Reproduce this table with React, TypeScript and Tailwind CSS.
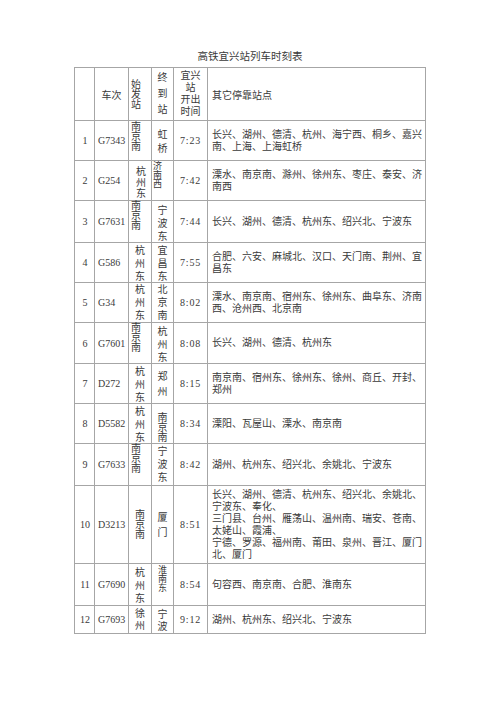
type Stack = {
  t: string
  lh: string
  cls: string
}

interface Train {
  no: number
  code: string
  from: Stack
  to: Stack
  time: string
  stops: string[]
}

const trains: Train[] = [
  {
    no: 1,
    code: 'G7343',
    from: { t: '南京南', lh: 'leading-[10px]', cls: 'justify-start items-start pl-[2px] pt-[1px]' },
    to: { t: '虹桥', lh: 'leading-[14px]', cls: 'justify-center items-center pt-[2px]' },
    time: '7:23',
    stops: ['长兴、湖州、德清、杭州、海宁西、桐乡、嘉兴', '南、上海、上海虹桥']
  },
  {
    no: 2,
    code: 'G254',
    from: { t: '杭州东', lh: 'leading-[11px]', cls: 'justify-center items-center pl-[2px] pt-[3px]' },
    to: { t: '济南西', lh: 'leading-[9px]', cls: 'justify-start items-start pl-[1px] pt-[1px] text-[9px]' },
    time: '7:42',
    stops: ['溧水、南京南、滁州、徐州东、枣庄、泰安、济', '南西']
  },
  {
    no: 3,
    code: 'G7631',
    from: { t: '南京南', lh: 'leading-[10px]', cls: 'justify-start items-start pl-[2px]' },
    to: { t: '宁波东', lh: 'leading-[13px]', cls: 'justify-start items-center pt-[3px]' },
    time: '7:44',
    stops: ['长兴、湖州、德清、杭州东、绍兴北、宁波东']
  },
  {
    no: 4,
    code: 'G586',
    from: { t: '杭州东', lh: 'leading-[13px]', cls: 'justify-start items-center pt-[1px]' },
    to: { t: '宜昌东', lh: 'leading-[13px]', cls: 'justify-start items-center pt-[1px]' },
    time: '7:55',
    stops: ['合肥、六安、麻城北、汉口、天门南、荆州、宜', '昌东']
  },
  {
    no: 5,
    code: 'G34',
    from: { t: '杭州东', lh: 'leading-[13px]', cls: 'justify-start items-center' },
    to: { t: '北京南', lh: 'leading-[13px]', cls: 'justify-start items-center' },
    time: '8:02',
    stops: ['溧水、南京南、宿州东、徐州东、曲阜东、济南', '西、沧州西、北京南']
  },
  {
    no: 6,
    code: 'G7601',
    from: { t: '南京南', lh: 'leading-[10px]', cls: 'justify-start items-start pl-[2px]' },
    to: { t: '杭州东', lh: 'leading-[13px]', cls: 'justify-start items-center pt-[2px]' },
    time: '8:08',
    stops: ['长兴、湖州、德清、杭州东']
  },
  {
    no: 7,
    code: 'D272',
    from: { t: '杭州东', lh: 'leading-[13px]', cls: 'justify-start items-center pt-[1px]' },
    to: { t: '郑州', lh: 'leading-[15px]', cls: 'justify-center items-center' },
    time: '8:15',
    stops: ['南京南、宿州东、徐州东、徐州、商丘、开封、', '郑州']
  },
  {
    no: 8,
    code: 'D5582',
    from: { t: '杭州东', lh: 'leading-[13px]', cls: 'justify-start items-center pt-[1px]' },
    to: { t: '南京南', lh: 'leading-[10px]', cls: 'justify-end items-center' },
    time: '8:34',
    stops: ['溧阳、瓦屋山、溧水、南京南']
  },
  {
    no: 9,
    code: 'G7633',
    from: { t: '南京南', lh: 'leading-[10px]', cls: 'justify-start items-start pl-[2px]' },
    to: { t: '宁波东', lh: 'leading-[13px]', cls: 'justify-start items-center pt-[1px]' },
    time: '8:42',
    stops: ['湖州、杭州东、绍兴北、余姚北、宁波东']
  },
  {
    no: 10,
    code: 'D3213',
    from: { t: '南京南', lh: 'leading-[10px]', cls: 'justify-center items-center' },
    to: { t: '厦门', lh: 'leading-[15px]', cls: 'justify-center items-center' },
    time: '8:51',
    stops: [
      '长兴、湖州、德清、杭州东、绍兴北、余姚北、',
      '宁波东、奉化、',
      '三门县、台州、雁荡山、温州南、瑞安、苍南、',
      '太姥山、霞浦、',
      '宁德、罗源、福州南、莆田、泉州、晋江、厦门',
      '北、厦门'
    ]
  },
  {
    no: 11,
    code: 'G7690',
    from: { t: '杭州东', lh: 'leading-[13px]', cls: 'justify-start items-center pt-[2px]' },
    to: { t: '淮南东', lh: 'leading-[9px]', cls: 'justify-start items-center pt-[2px] text-[9px]' },
    time: '8:54',
    stops: ['句容西、南京南、合肥、淮南东']
  },
  {
    no: 12,
    code: 'G7693',
    from: { t: '徐州', lh: 'leading-[12px]', cls: 'justify-center items-center' },
    to: { t: '宁波', lh: 'leading-[12px]', cls: 'justify-center items-center pt-[2px]' },
    time: '9:12',
    stops: ['湖州、杭州东、绍兴北、宁波东']
  }
]

const cell = 'border-r border-b border-[#a6a6a6]'

function StackText({ s }: { s: Stack }) {
  return (
    <div className={`${cell} flex flex-col ${s.cls}`}>
      {s.t.split('').map((c, i) => (
        <span key={i} className={`block ${s.lh}`}>
          {c}
        </span>
      ))}
    </div>
  )
}

export default function App() {
  return (
    <div className="w-[500px] h-[707px] bg-white pt-[51px] text-[10px] text-[#3a3a3a] font-['Liberation_Serif','Noto_Sans_CJK_SC',serif]">
      <div className="mx-auto w-[352px] h-[12px] leading-[12px] text-center text-[10.5px] mb-[4px]">
        高铁宜兴站列车时刻表
      </div>

      <div className="mx-auto w-[352px] grid grid-cols-[20px_34px_23px_22px_34px_218px] grid-rows-[53px_40px_40px_42px_40px_40px_41px_40px_40px_42px_78px_42px_28px] border-l border-t border-[#a6a6a6]">
        {/* header row */}
        <div className={cell}></div>
        <div className={`${cell} flex items-center justify-center pt-[2px]`}>车次</div>
        <div className={`${cell} flex flex-col justify-center items-start pl-[2px] pt-[2px]`}>
          <span className="leading-[10px]">始</span>
          <span className="leading-[10px]">发</span>
          <span className="leading-[10px]">站</span>
        </div>
        <div className={`${cell} flex flex-col justify-center items-center`}>
          <span className="leading-[16px]">终</span>
          <span className="leading-[16px]">到</span>
          <span className="leading-[16px]">站</span>
        </div>
        <div className={`${cell} flex flex-col justify-center items-center`}>
          <span className="leading-[12px]">宜兴</span>
          <span className="leading-[12px]">站</span>
          <span className="leading-[12px]">开出</span>
          <span className="leading-[12px]">时间</span>
        </div>
        <div className={`${cell} flex items-center pl-[4px] pt-[2px]`}>其它停靠站点</div>

        {trains.map((r) => (
          <>
            <div key={`n${r.no}`} className={`${cell} flex items-center justify-center pl-[1px]`}>
              {r.no}
            </div>
            <div key={`c${r.no}`} className={`${cell} flex items-center pl-[3px]`}>
              {r.code}
            </div>
            <StackText key={`f${r.no}`} s={r.from} />
            <StackText key={`t${r.no}`} s={r.to} />
            <div key={`h${r.no}`} className={`${cell} flex items-center justify-center tracking-[0.8px]`}>
              {r.time}
            </div>
            <div key={`s${r.no}`} className={`${cell} flex flex-col justify-center pl-[4px]`}>
              {r.stops.map((line, i) => (
                <span key={i} className="block leading-[12px] whitespace-nowrap">
                  {line}
                </span>
              ))}
            </div>
          </>
        ))}
      </div>
    </div>
  )
}
